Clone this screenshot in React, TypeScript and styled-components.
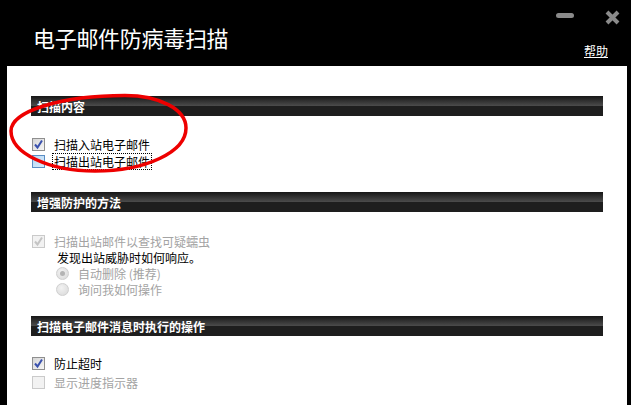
import React from "react";
import styled, { createGlobalStyle, css } from "styled-components";

const GlobalStyle = createGlobalStyle`
  html, body {
    margin: 0;
    padding: 0;
    background: #000;
  }
  body {
    font-family: "Noto Sans CJK SC", "Noto Sans", sans-serif;
    font-size: 12px;
  }
`;

type BoxKind = "normal" | "focus" | "disabled";

const Check = ({ color }: { color: string }) => (
  <svg width="11" height="11" viewBox="0 0 11 11">
    <path d="M2 5.5 L4.5 8.5 L9 1.5" fill="none" stroke={color} strokeWidth="2" />
  </svg>
);

const CheckBox = ({ kind, checked }: { kind: BoxKind; checked?: boolean }) => (
  <Box $kind={kind}>
    {checked && <Check color={kind === "disabled" ? "#c4c4c4" : "#3a51ad"} />}
  </Box>
);

const Radio = ({ selected }: { selected?: boolean }) => (
  <RadioDot>{selected && <RadioInner />}</RadioDot>
);

const App = () => {
  return (
    <>
      <GlobalStyle />
      <Window>
        <TitleBar>
          <Title>电子邮件防病毒扫描</Title>
          <RightSide>
            <Controls>
              <MinButton />
              <CloseButton width="15" height="15" viewBox="0 0 15 15">
                <path d="M2 2 L13 13 M13 2 L2 13" stroke="#8a8a8a" strokeWidth="4" />
              </CloseButton>
            </Controls>
            <Help href="#">帮助</Help>
          </RightSide>
        </TitleBar>

        <Panel>
          <Section>
            <Header>扫描内容</Header>
            <List $top={20}>
              <Row $h={17}>
                <CheckBox kind="normal" checked />
                <Label>扫描入站电子邮件</Label>
              </Row>
              <Row $h={17}>
                <CheckBox kind="focus" />
                <Label $focused>扫描出站电子邮件</Label>
              </Row>
            </List>
          </Section>

          <Section $gap={22}>
            <Header>增强防护的方法</Header>
            <List $top={21}>
              <Row $h={16}>
                <CheckBox kind="disabled" checked />
                <Label $disabled>扫描出站邮件以查找可疑蠕虫</Label>
              </Row>
              <Row $h={16} $indent={26}>
                <Label $plain>发现出站威胁时如何响应。</Label>
              </Row>
              <Row $h={16} $indent={25}>
                <Radio selected />
                <Label $disabled>自动删除 (推荐)</Label>
              </Row>
              <Row $h={16} $indent={25}>
                <Radio />
                <Label $disabled>询问我如何操作</Label>
              </Row>
            </List>
          </Section>

          <Section $gap={19}>
            <Header>扫描电子邮件消息时执行的操作</Header>
            <List $top={18}>
              <Row $h={19}>
                <CheckBox kind="normal" checked />
                <Label>防止超时</Label>
              </Row>
              <Row $h={19}>
                <CheckBox kind="disabled" />
                <Label $disabled>显示进度指示器</Label>
              </Row>
            </List>
          </Section>
        </Panel>

        <Marker width="200" height="95" viewBox="0 85 200 95">
          <path
            d="M11 131 C11 111 62 95.5 125 95.5 C159 95.5 186 109 186 128 C186 152 146 171 95 171 C48 171 11 153 11 131 Z"
            fill="none"
            stroke="#ee0000"
            strokeWidth="3.5"
          />
        </Marker>
      </Window>
    </>
  );
};

export default App;

const Window = styled.div`
  position: relative;
  width: 631px;
  height: 405px;
  display: flex;
  flex-direction: column;
  overflow: hidden;
  background: #000;
`;

const TitleBar = styled.div`
  display: flex;
  justify-content: space-between;
  height: 66px;
  padding: 0 11px 0 33px;
  box-sizing: border-box;
  flex-shrink: 0;
`;

const Title = styled.div`
  margin-top: 24px;
  color: #fff;
  font-size: 22px;
  line-height: 26px;
  letter-spacing: -0.3px;
`;

const RightSide = styled.div`
  display: flex;
  flex-direction: column;
  align-items: flex-end;
  padding-top: 9px;
`;

const Controls = styled.div`
  display: flex;
  align-items: flex-start;
  gap: 31px;
  height: 16px;
`;

const MinButton = styled.span`
  display: block;
  margin-top: 4px;
  width: 18px;
  height: 5px;
  border-radius: 3px;
  background: #8a8a8a;
`;

const CloseButton = styled.svg`
  display: block;
  margin-top: 1px;
`;

const Help = styled.a`
  margin-top: 19px;
  margin-right: 12px;
  color: #fff;
  font-size: 12px;
  line-height: 14px;
  text-decoration: underline;
`;

const Panel = styled.div`
  flex: 1;
  margin-left: 7px;
  width: 620px;
  background: #fff;
  padding: 30px 24px 0 24px;
  box-sizing: border-box;
`;

const Section = styled.div<{ $gap?: number }>`
  margin-top: ${(p) => p.$gap ?? 0}px;
`;

const Header = styled.div`
  height: 20px;
  padding-left: 6px;
  display: flex;
  align-items: center;
  color: #fff;
  font-weight: bold;
  font-size: 12px;
  background: linear-gradient(
    to bottom,
    #161616 0%,
    #4c4c4c 50%,
    #1e1e1e 50%,
    #1e1e1e 100%
  );
`;

const List = styled.div<{ $top: number }>`
  padding-top: ${(p) => p.$top}px;
  display: flex;
  flex-direction: column;
`;

const Row = styled.div<{ $h: number; $indent?: number }>`
  height: ${(p) => p.$h}px;
  display: flex;
  align-items: center;
  gap: 9px;
  padding-left: ${(p) => p.$indent ?? 1}px;
`;

const Label = styled.span<{ $disabled?: boolean; $focused?: boolean; $plain?: boolean }>`
  color: ${(p) => (p.$disabled ? "#a3a3a3" : "#000")};
  font-size: 12px;
  line-height: 15px;
  white-space: nowrap;
  ${(p) =>
    p.$focused &&
    css`
      border: 1px dotted #000;
      padding: 0 1px;
      margin-left: -2px;
    `}
`;

const boxStyles = {
  normal: css`
    border-color: #8f8f8f;
    background: linear-gradient(135deg, #d6d6d6 0%, #f6f6f6 100%);
  `,
  focus: css`
    border-color: #5a8dc4;
    background: linear-gradient(135deg, #b6d8f4 0%, #d9ecfb 100%);
  `,
  disabled: css`
    border-color: #cacaca;
    background: #f2f2f2;
  `,
};

const Box = styled.span<{ $kind: BoxKind }>`
  width: 13px;
  height: 13px;
  box-sizing: border-box;
  border: 1px solid;
  display: flex;
  align-items: center;
  justify-content: center;
  flex-shrink: 0;
  ${(p) => boxStyles[p.$kind]}
`;

const RadioDot = styled.span`
  width: 13px;
  height: 13px;
  border-radius: 50%;
  box-sizing: border-box;
  border: 1px solid #cfcfcf;
  background: radial-gradient(circle at 40% 35%, #f2f2f2 0%, #d8d8d8 100%);
  display: flex;
  align-items: center;
  justify-content: center;
  flex-shrink: 0;
`;

const RadioInner = styled.span`
  width: 5px;
  height: 5px;
  border-radius: 50%;
  background: #b4b4b4;
`;

const Marker = styled.svg`
  position: absolute;
  left: 0;
  top: 85px;
  pointer-events: none;
`;
